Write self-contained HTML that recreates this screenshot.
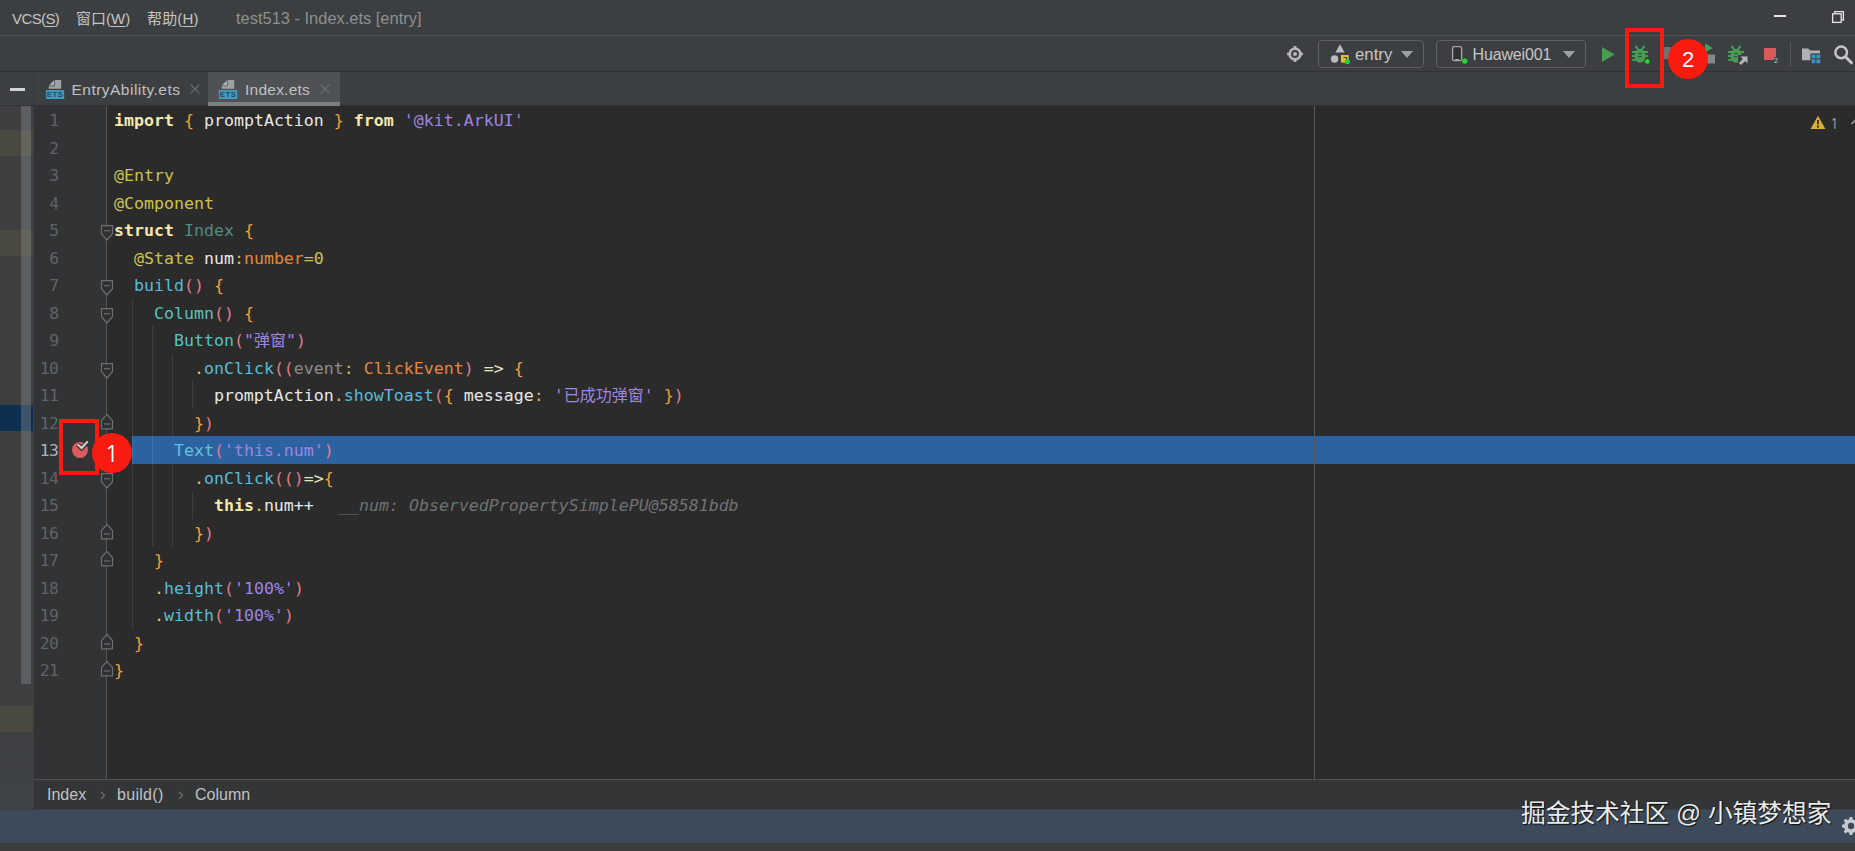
<!DOCTYPE html>
<html lang="zh">
<head>
<meta charset="utf-8">
<title>test513 - Index.ets [entry]</title>
<style>
*{box-sizing:border-box;margin:0;padding:0}
html,body{width:1855px;height:851px;overflow:hidden;background:#3c3f41}
body{position:relative;font-family:"Liberation Sans","Noto Sans CJK SC",sans-serif;color:#bbbbbb;font-size:15px}
.abs{position:absolute}
#menubar{left:0;top:0;width:1855px;height:35px;background:#3c3f41}
#menubar .mi{position:absolute;top:0;height:35px;line-height:37px;font-size:15px;color:#c4c4c4;white-space:nowrap}
#menubar u{text-decoration:underline;text-underline-offset:2px}
#menuline{left:0;top:35px;width:1855px;height:1px;background:#515354}
#toolbar{left:0;top:36px;width:1855px;height:35px;background:#3c3f41}
#toolline{left:0;top:71px;width:1855px;height:1px;background:#2f3133}
#tabbar{left:0;top:72px;width:1855px;height:34px;background:#3c3f41}
.tab{position:absolute;top:0;height:34px;line-height:36.500px;font-size:15.500px;color:#c0c0c0;white-space:nowrap}
#leftstrip{left:0;top:106px;width:34px;height:703px;background:linear-gradient(#3d3f41 0,#3d3f41 88%,#3f4347 100%)}
#gutter{left:34px;top:106px;width:72px;height:673px;background:#313335}
#gutterline{left:106px;top:106px;width:1px;height:673px;background:#555555}
#editor{left:107px;top:106px;width:1748px;height:673px;background:#2b2b2b}
#margin{left:1314px;top:106px;width:1px;height:673px;background:#565859}
#crumbs{left:34px;top:779px;width:1821px;height:30px;background:#333537;border-top:1px solid #4f5153}
#status{left:0;top:809px;width:1855px;height:34px;background:#3c4a59;border-top:1px solid #37404a}
#bottom{left:0;top:843px;width:1855px;height:8px;background:#3b3d3f}
.ln{position:absolute;left:32.500px;width:26px;text-align:right;height:27.5px;line-height:27.5px;font-family:"DejaVu Sans Mono","Liberation Mono",monospace;font-size:16.4px;color:#606366;letter-spacing:-0.5px;margin-top:1px}
.cl{position:absolute;left:114px;margin-top:1px;height:27.5px;line-height:27.5px;font-family:"DejaVu Sans Mono","Noto Sans CJK SC",monospace;font-size:16.6px;color:#e8e8e8;white-space:pre}
.cl i{font-style:normal}
.cl b.k{font-weight:bold;color:#f3e8ae}
.cl .br{color:#f0a336}
.cl .s{color:#9d85e6}
.cl .d{color:#cbc24e}
.cl .ty{color:#4f8c84}
.cl .co{color:#cfb65a}
.cl .o{color:#e4873c}
.cl .f{color:#58bddb}
.cl .c{color:#58c2c4}
.cl .p{color:#e07c8c}
.cl .dt{color:#dcc562}
.cl .g{color:#8c8c8c}
.cl .ar{color:#e8e3bd}
.cl .tx{color:#63c0dc}
.cl .cj{font-size:16px}
.ln.cur{color:#b0b0b0}
#hl{left:132px;top:436px;width:1723px;height:28px;background:#2d62a0}
.hint{position:absolute;left:339px;top:492px;height:27.5px;line-height:27.5px;font-family:"DejaVu Sans Mono",monospace;font-size:16.6px;font-style:italic;color:#6f7173;white-space:pre}
.combo{height:28px;border:1px solid #5e6062;border-radius:4px;background:#3c3f41}
.tt{height:28px;line-height:30px;font-size:17px;color:#c6c6c6;white-space:nowrap}
.cr{position:absolute;top:0;height:28px;line-height:30px;font-size:16px;color:#c2c2c2;white-space:nowrap}
.cs{position:absolute;top:0;height:28px;line-height:27px;font-size:19px;color:#67696b;margin-left:0.5px}
#wm{left:1521px;top:797px;height:34px;line-height:34px;font-size:24.700px;color:#ececec;white-space:nowrap;font-family:"Liberation Sans","Noto Sans CJK SC",sans-serif;text-shadow:1px 1px 1px rgba(0,0,0,.75),0 0 2px rgba(0,0,0,.4)}
.rc{border-radius:50%;background:#f91b10;color:#fff;text-align:center;font-family:"Liberation Sans",sans-serif}
.ig{width:1px;background:rgba(255,255,255,.09)}
</style>
</head>
<body>
<div id="menubar" class="abs">
<span class="mi" id="m1" style="left:12px;letter-spacing:-0.6px">VCS(<u>S</u>)</span>
<span class="mi" id="m2" style="left:76px">窗口(<u>W</u>)</span>
<span class="mi" id="m3" style="left:147px;letter-spacing:0.15px">帮助(<u>H</u>)</span>
<span class="mi" id="m4" style="left:236px;color:#8d8f90;font-size:16.45px">test513 - Index.ets [entry]</span>
</div>
<div id="menuline" class="abs"></div>
<div id="toolbar" class="abs">
<svg class="abs" style="left:1285px;top:8px" width="20" height="20" viewBox="0 0 20 20"><circle cx="10" cy="10" r="5.3" fill="none" stroke="#b4b6b8" stroke-width="2.800"/><circle cx="10" cy="10" r="2" fill="#b4b6b8"/><path d="M10 2v3M10 15v3M2 10h3M15 10h3" stroke="#b4b6b8" stroke-width="2.600"/></svg>
<div class="combo abs" style="left:1318px;top:4px;width:106px"></div>
<svg class="abs" style="left:1329px;top:8px" width="22" height="22" viewBox="0 0 22 22"><path d="M11 0.300L15.600 8.400H6.400z" fill="#b8babc"/><circle cx="5.6" cy="15" r="3.7" fill="#b8babc"/><rect x="12" y="11" width="7.6" height="7.6" fill="#e9c02a"/><path d="M14.5 13.5h3v3" fill="none" stroke="#3c3f41" stroke-width="1.2"/><circle cx="18.3" cy="17.6" r="2.7" fill="#27d62b"/></svg>
<span class="tt abs" style="left:1355px;top:4px;font-size:16.8px" id="t_entry">entry</span>
<svg class="abs" style="left:1401px;top:15px" width="12" height="7" viewBox="0 0 12 7"><path d="M0 0h12L6 7z" fill="#9da0a2"/></svg>
<div class="combo abs" style="left:1436px;top:4px;width:150px"></div>
<svg class="abs" style="left:1449px;top:8px" width="20" height="20" viewBox="0 0 20 20"><rect x="3.600" y="2.600" width="9" height="14" rx="1.400" fill="#2f3133" stroke="#a1a3a5" stroke-width="1.400"/><rect x="6.2" y="15" width="3.8" height="1.2" fill="#a7a9ab"/><circle cx="15.8" cy="17.1" r="2.7" fill="#27d62b"/></svg>
<span class="tt abs" style="left:1472.500px;top:4px;font-size:16px;letter-spacing:-0.15px" id="t_hw">Huawei001</span>
<svg class="abs" style="left:1563px;top:15px" width="12" height="7" viewBox="0 0 12 7"><path d="M0 0h12L6 7z" fill="#9da0a2"/></svg>
<svg class="abs" style="left:1602px;top:10.500px" width="14" height="16" viewBox="0 0 14 16"><path d="M0 0L12.600 7.500L0 15z" fill="#499c54"/></svg>
<svg class="abs" style="left:1630px;top:8px" width="22" height="22" viewBox="0 0 22 22"><g><ellipse cx="10" cy="11.800" rx="5.600" ry="7" fill="#499c54"/><path d="M5.400 2l2.800 3.400M14.600 2l-2.800 3.400M2 8h5M1.800 12h5M2.200 16h5M13 8h5M13.200 12h5" stroke="#499c54" stroke-width="2" fill="none"/><path d="M8 9.600h4M8 12.600h4" stroke="#33583a" stroke-width="1.300"/></g><circle cx="17.2" cy="17.5" r="2.7" fill="#1fdc24" stroke="#3c3f41" stroke-width="0.8"/></svg>
<svg class="abs" style="left:1662px;top:6px" width="56" height="26" viewBox="0 0 56 26"><path d="M2 5h7v12H2z" fill="#6f7173"/><path d="M43 1.500l8 4.500-8 4.500z" fill="#3fa05a"/><path d="M45 12.500h8v9h-8z" fill="#85878a"/></svg>
<svg class="abs" style="left:1726px;top:8px" width="24" height="22" viewBox="0 0 24 22"><ellipse cx="10" cy="11.800" rx="5.600" ry="7" fill="#499c54"/><path d="M5.400 2l2.800 3.400M14.600 2l-2.800 3.400M2 8h5M1.800 12h5M2.200 16h5M13 8h5" stroke="#499c54" stroke-width="2" fill="none"/><path d="M8 9.600h4M8 12.600h3" stroke="#33583a" stroke-width="1.300"/><path d="M12 11h10v10h-10z" fill="#3c3f41"/><path d="M14.5 12.5h7v7l-2.4-2.4-4 4-2.2-2.2 4-4z" fill="#b4b6b8"/></svg>
<div class="abs" style="left:1764px;top:12px;width:12px;height:12px;background:#db5b5b;border-radius:1px"></div>
<span class="abs" style="left:1773.500px;top:21px;font-size:7px;line-height:8px;color:#c8c8c8;background:#3c3f41;padding:0 0.5px">2</span>
<div class="abs" style="left:1790px;top:6px;width:1px;height:24px;background:#555759"></div>
<svg class="abs" style="left:1801px;top:11px" width="20" height="17" viewBox="0 0 20 17"><path d="M1 1.4h6.2l2 2.2H19v9.6H1z" fill="#afb1b3"/><path d="M9.4 6.4H20v10.6H9.4z" fill="#3c3f41"/><rect x="10.6" y="7.6" width="3.8" height="3.8" fill="#3a93c6"/><rect x="15.4" y="7.6" width="3.8" height="3.8" fill="#3a93c6"/><rect x="10.6" y="12.4" width="3.8" height="3.8" fill="#3a93c6"/><rect x="15.4" y="12.4" width="3.8" height="3.8" fill="#3a93c6"/></svg>
<svg class="abs" style="left:1832.500px;top:7.500px" width="21" height="21" viewBox="0 0 21 21"><circle cx="8.2" cy="8.4" r="5.8" fill="none" stroke="#c3c5c7" stroke-width="2.5"/><path d="M12.5 12.8l6 6" stroke="#c3c5c7" stroke-width="3" stroke-linecap="round"/></svg>
</div>
<div id="toolline" class="abs"></div>
<div id="tabbar" class="abs">
<div class="abs" style="left:0;top:0;width:33px;height:34px;background:#3d4042"></div>
<div class="abs" style="left:33px;top:0;width:1px;height:34px;background:#323537"></div>
<div class="abs" style="left:9.500px;top:15.500px;width:15px;height:3px;background:#d4d4d4"></div>
<div class="abs" style="left:0;top:33px;width:1855px;height:1px;background:#313335"></div>
<div class="abs" style="left:208px;top:0;width:132px;height:30px;background:#4e5254"></div>
<div class="abs" style="left:208px;top:30px;width:132px;height:4px;background:#7b7f83"></div>
<svg class="abs" style="left:45px;top:7px" width="20" height="21" viewBox="0 0 20 21"><path d="M9.700 1H16.200V9.800H3.700V7.200H9.700z" fill="#9da2a7"/><path d="M3.900 6.400L9 1.300V6.400z" fill="#aeb3b8"/><rect x="0.900" y="11.100" width="18.300" height="8.900" fill="#429cb8"/><text x="10.100" y="18.300" font-family="Liberation Sans,sans-serif" font-size="7.600" font-weight="bold" fill="#1d4a72" text-anchor="middle" letter-spacing="0.700">ETS</text></svg>
<span class="tab" style="left:71.500px;letter-spacing:0.475px" id="t_tab1">EntryAbility.ets</span>
<svg class="abs" style="left:190px;top:12px" width="10" height="10" viewBox="0 0 10 10"><path d="M0.7 0.7l8.6 8.6M9.3 0.7L0.7 9.300" stroke="#6c6e70" stroke-width="1.2" fill="none"/></svg><svg class="abs" style="left:218px;top:7px" width="20" height="21" viewBox="0 0 20 21"><path d="M9.700 1H16.200V9.800H3.700V7.200H9.700z" fill="#9da2a7"/><path d="M3.900 6.400L9 1.300V6.400z" fill="#aeb3b8"/><rect x="0.900" y="11.100" width="18.300" height="8.900" fill="#429cb8"/><text x="10.100" y="18.300" font-family="Liberation Sans,sans-serif" font-size="7.600" font-weight="bold" fill="#1d4a72" text-anchor="middle" letter-spacing="0.700">ETS</text></svg>
<span class="tab" style="left:245px;letter-spacing:0.24px" id="t_tab2">Index.ets</span>
<svg class="abs" style="left:320px;top:12px" width="10" height="10" viewBox="0 0 10 10"><path d="M0.7 0.7l8.6 8.6M9.3 0.7L0.7 9.300" stroke="#6c6e70" stroke-width="1.2" fill="none"/></svg>
</div>
<div id="leftstrip" class="abs">
<div class="abs" style="left:0;top:24px;width:33px;height:26px;background:#4a4940"></div>
<div class="abs" style="left:0;top:124px;width:33px;height:26px;background:#4a4940"></div>
<div class="abs" style="left:0;top:299px;width:33px;height:26px;background:#0e3050"></div>
<div class="abs" style="left:0;top:600px;width:33px;height:26px;background:#4a4940"></div>
<div class="abs" style="left:21px;top:0;width:10px;height:578px;background:rgba(150,152,154,.35)"></div>
</div>
<div id="gutter" class="abs"></div>
<div id="gutterline" class="abs"></div>
<div id="editor" class="abs"></div>
<div id="hl" class="abs"></div>
<div id="margin" class="abs"></div>
<!--GUIDES-->
<svg class="abs" style="left:100px;top:224.5px" width="14" height="17" viewBox="0 0 14 17"><path d="M1.500 0.700H12.500V8.700L7 15L1.500 8.700z" fill="#2e3032" stroke="#6c6e70" stroke-width="1.200"/><path d="M4 5.700h6" stroke="#6c6e70" stroke-width="1.200"/></svg>
<svg class="abs" style="left:100px;top:279.5px" width="14" height="17" viewBox="0 0 14 17"><path d="M1.500 0.700H12.500V8.700L7 15L1.500 8.700z" fill="#2e3032" stroke="#6c6e70" stroke-width="1.200"/><path d="M4 5.700h6" stroke="#6c6e70" stroke-width="1.200"/></svg>
<svg class="abs" style="left:100px;top:307.5px" width="14" height="17" viewBox="0 0 14 17"><path d="M1.500 0.700H12.500V8.700L7 15L1.500 8.700z" fill="#2e3032" stroke="#6c6e70" stroke-width="1.200"/><path d="M4 5.700h6" stroke="#6c6e70" stroke-width="1.200"/></svg>
<svg class="abs" style="left:100px;top:362.5px" width="14" height="17" viewBox="0 0 14 17"><path d="M1.500 0.700H12.500V8.700L7 15L1.500 8.700z" fill="#2e3032" stroke="#6c6e70" stroke-width="1.200"/><path d="M4 5.700h6" stroke="#6c6e70" stroke-width="1.200"/></svg>
<svg class="abs" style="left:100px;top:472.5px" width="14" height="17" viewBox="0 0 14 17"><path d="M1.500 0.700H12.500V8.700L7 15L1.500 8.700z" fill="#2e3032" stroke="#6c6e70" stroke-width="1.200"/><path d="M4 5.700h6" stroke="#6c6e70" stroke-width="1.200"/></svg>
<svg class="abs" style="left:100px;top:413.3px" width="14" height="17" viewBox="0 0 14 17"><path d="M1.500 15.800H12.500V7.500L7 1.300L1.500 7.500z" fill="#2e3032" stroke="#6c6e70" stroke-width="1.200"/><path d="M4 11h6" stroke="#6c6e70" stroke-width="1.200"/></svg>
<svg class="abs" style="left:100px;top:523.3px" width="14" height="17" viewBox="0 0 14 17"><path d="M1.500 15.800H12.500V7.500L7 1.300L1.500 7.500z" fill="#2e3032" stroke="#6c6e70" stroke-width="1.200"/><path d="M4 11h6" stroke="#6c6e70" stroke-width="1.200"/></svg>
<svg class="abs" style="left:100px;top:550.3px" width="14" height="17" viewBox="0 0 14 17"><path d="M1.500 15.800H12.500V7.500L7 1.300L1.500 7.500z" fill="#2e3032" stroke="#6c6e70" stroke-width="1.200"/><path d="M4 11h6" stroke="#6c6e70" stroke-width="1.200"/></svg>
<svg class="abs" style="left:100px;top:633.3px" width="14" height="17" viewBox="0 0 14 17"><path d="M1.500 15.800H12.500V7.500L7 1.300L1.500 7.500z" fill="#2e3032" stroke="#6c6e70" stroke-width="1.200"/><path d="M4 11h6" stroke="#6c6e70" stroke-width="1.200"/></svg>
<svg class="abs" style="left:100px;top:660.3px" width="14" height="17" viewBox="0 0 14 17"><path d="M1.500 15.800H12.500V7.500L7 1.300L1.500 7.500z" fill="#2e3032" stroke="#6c6e70" stroke-width="1.200"/><path d="M4 11h6" stroke="#6c6e70" stroke-width="1.200"/></svg>
<div class="abs ig" style="left:132px;top:298.5px;height:330.0px"></div>
<div class="abs ig" style="left:152px;top:326.0px;height:220.0px"></div>
<div class="abs ig" style="left:172px;top:353.5px;height:82.5px"></div>
<div class="abs ig" style="left:172px;top:463.5px;height:82.5px"></div>
<div class="abs ig" style="left:192px;top:381.0px;height:27.5px"></div>
<div class="abs ig" style="left:192px;top:491.0px;height:27.5px"></div>
<!--CODE-->
<div class="ln" style="top:106.0px">1</div>
<div class="ln" style="top:133.5px">2</div>
<div class="ln" style="top:161.0px">3</div>
<div class="ln" style="top:188.5px">4</div>
<div class="ln" style="top:216.0px">5</div>
<div class="ln" style="top:243.5px">6</div>
<div class="ln" style="top:271.0px">7</div>
<div class="ln" style="top:298.5px">8</div>
<div class="ln" style="top:326.0px">9</div>
<div class="ln" style="top:353.5px">10</div>
<div class="ln" style="top:381.0px">11</div>
<div class="ln" style="top:408.5px">12</div>
<div class="ln cur" style="top:436.0px">13</div>
<div class="ln" style="top:463.5px">14</div>
<div class="ln" style="top:491.0px">15</div>
<div class="ln" style="top:518.5px">16</div>
<div class="ln" style="top:546.0px">17</div>
<div class="ln" style="top:573.5px">18</div>
<div class="ln" style="top:601.0px">19</div>
<div class="ln" style="top:628.5px">20</div>
<div class="ln" style="top:656.0px">21</div>
<div class="cl" style="top:106.0px"><b class="k">import</b> <i class="br">{</i> promptAction <i class="br">}</i> <b class="k">from</b> <i class="s">'@kit.ArkUI'</i></div>
<div class="cl" style="top:161.0px"><i class="d">@Entry</i></div>
<div class="cl" style="top:188.5px"><i class="d">@Component</i></div>
<div class="cl" style="top:216.0px"><b class="k">struct</b> <i class="ty">Index</i> <i class="br">{</i></div>
<div class="cl" style="top:243.5px">  <i class="d">@State</i> num<i class="co">:</i><i class="o">number</i><i class="d">=0</i></div>
<div class="cl" style="top:271.0px">  <i class="f">build</i><i class="p">()</i> <i class="br">{</i></div>
<div class="cl" style="top:298.5px">    <i class="c">Column</i><i class="p">()</i> <i class="br">{</i></div>
<div class="cl" style="top:326.0px">      <i class="c">Button</i><i class="p">(</i><i class="s">"<span class="cj">弹窗</span>"</i><i class="p">)</i></div>
<div class="cl" style="top:353.5px">        <i class="dt">.</i><i class="f">onClick</i><i class="p">((</i><i class="g">event</i><i class="co">:</i> <i class="o">ClickEvent</i><i class="p">)</i> <i class="ar">=&gt;</i> <i class="br">{</i></div>
<div class="cl" style="top:381.0px">          promptAction<i class="dt">.</i><i class="f">showToast</i><i class="p">(</i><i class="br">{</i> message<i class="co">:</i> <i class="s">'<span class="cj">已成功弹窗</span>'</i> <i class="br">}</i><i class="p">)</i></div>
<div class="cl" style="top:408.5px">        <i class="br">}</i><i class="p">)</i></div>
<div class="cl" style="top:436.0px">      <i class="tx">Text</i><i class="p">(</i><i class="s">'this.num'</i><i class="p">)</i></div>
<div class="cl" style="top:463.5px">        <i class="dt">.</i><i class="f">onClick</i><i class="p">(()</i><i class="ar">=&gt;</i><i class="br">{</i></div>
<div class="cl" style="top:491.0px">          <b class="k">this</b><i class="dt">.</i>num++</div>
<div class="cl" style="top:518.5px">        <i class="br">}</i><i class="p">)</i></div>
<div class="cl" style="top:546.0px">    <i class="br">}</i></div>
<div class="cl" style="top:573.5px">    <i class="dt">.</i><i class="f">height</i><i class="p">(</i><i class="s">'100%'</i><i class="p">)</i></div>
<div class="cl" style="top:601.0px">    <i class="dt">.</i><i class="f">width</i><i class="p">(</i><i class="s">'100%'</i><i class="p">)</i></div>
<div class="cl" style="top:628.5px">  <i class="br">}</i></div>
<div class="cl" style="top:656.0px"><i class="br">}</i></div>
<div class="hint">__num: ObservedPropertySimplePU@58581bdb</div>
<!--/CODE-->
<div id="crumbs" class="abs">
<span class="cr" style="left:13px" id="t_c1">Index</span>
<span class="cs" style="left:65px">›</span>
<span class="cr" style="left:83px;letter-spacing:0.3px" id="t_c2">build()</span>
<span class="cs" style="left:143px">›</span>
<span class="cr" style="left:161px" id="t_c3">Column</span>
</div>
<div id="status" class="abs"></div>
<div id="bottom" class="abs"></div>
<div id="wm" class="abs">掘金技术社区 @ 小镇梦想家</div>
<svg class="abs" style="left:1842px;top:817px" width="18" height="18" viewBox="0 0 18 18"><path d="M9 0l1.300 0.100.5 2.300 1.700.700 2-1.300 1.800 1.800-1.300 2 .7 1.700 2.300.5v2.600l-2.300.5-.7 1.700 1.300 2-1.800 1.800-2-1.300-1.700.7-.5 2.300H7.700l-.5-2.300-1.700-.7-2 1.300-1.800-1.800 1.300-2-.7-1.700L0 10.300V7.700l2.300-.5.700-1.700-1.300-2 1.800-1.800 2 1.300 1.700-.7.500-2.300z" fill="#c5cad0"/><circle cx="9" cy="9" r="3.200" fill="#3c4a59"/></svg>
<!-- window controls -->
<div class="abs" style="left:1774px;top:15px;width:12px;height:1.500px;background:#e6e6e6"></div>
<svg class="abs" style="left:1831px;top:10px" width="14" height="14" viewBox="0 0 14 14"><path d="M3.800 3.600V1.600H12.400V10.200H10.400" fill="none" stroke="#e6e6e6" stroke-width="1.300"/><rect x="1.600" y="3.800" width="8.600" height="8.600" fill="none" stroke="#e6e6e6" stroke-width="1.300"/></svg>
<!-- warning -->
<svg class="abs" style="left:1810px;top:115px" width="16" height="15" viewBox="0 0 16 15"><path d="M8 0.800L15.400 14H0.600z" fill="#dcae2e"/><path d="M8 5v4.600" stroke="#2b2b2b" stroke-width="1.800"/><circle cx="8" cy="11.700" r="1.100" fill="#2b2b2b"/></svg>
<span class="abs" style="left:1830px;top:114px;height:20px;line-height:20.500px;font-size:14.500px;color:#a4a6a8;font-family:NanumGothic,'Liberation Sans',sans-serif">1</span>
<svg class="abs" style="left:1851px;top:118px" width="8" height="8" viewBox="0 0 8 8"><path d="M0.500 6L4.500 2l4 4" stroke="#a4a6a8" stroke-width="1.400" fill="none"/></svg>
<!-- breakpoint -->
<svg class="abs" style="left:70px;top:438px" width="22" height="22" viewBox="0 0 22 22"><circle cx="10" cy="12" r="8" fill="#db5c5c"/><path d="M7.600 6.600l4 3.600 6.400-6.400" stroke="#313335" stroke-width="4.400" fill="none"/><path d="M7.800 6.400l3.800 3.600 6.200-6.600" stroke="#d8d8d8" stroke-width="2" fill="none"/></svg>
<!-- annotations -->
<div class="abs" style="left:59px;top:419px;width:40px;height:56px;border:4.500px solid #f91b10"></div>
<div class="abs rc" style="left:91.800px;top:433px;width:40px;height:40px;line-height:40px;font-size:24px;font-family:NanumGothic,'Liberation Sans',sans-serif">1</div>
<div class="abs" style="left:1625px;top:28px;width:39px;height:60px;border:4px solid #f91b10"></div>
<div class="abs rc" style="left:1668px;top:38.500px;width:40px;height:40px;line-height:41.500px;font-size:22px">2</div>

</body>
</html>
